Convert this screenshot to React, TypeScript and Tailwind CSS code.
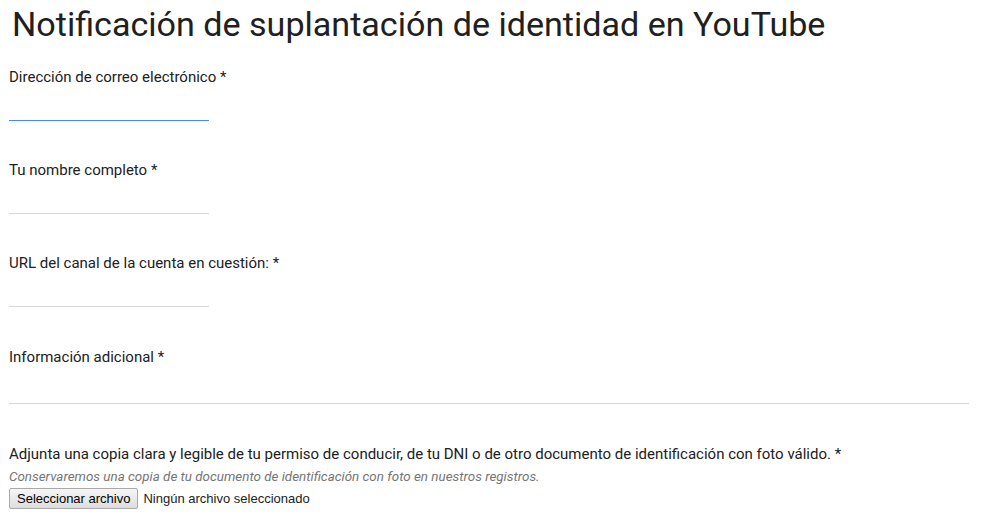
export default function App() {
  return (
    <div className="min-h-[531px] bg-white text-[#212121] font-['Roboto',sans-serif]">
      <h1 className="pl-[12px] pt-[2px] text-[34.1px] leading-[44px] font-normal text-[#202020]">
        Notificación de suplantación de identidad en YouTube
      </h1>
      <div className="pl-[9px] pr-[21px] pt-[22px]">
        <Field label="Dirección de correo electrónico *" active />
        <Field label="Tu nombre completo *" />
        <Field label="URL del canal de la cuenta en cuestión: *" />
        <div className="pt-[1px]">
          <div className="text-[15px] leading-[18px]">Información adicional *</div>
          <div className="mt-[37px] w-full h-[1px] bg-[#d6d6d6]" />
        </div>
        <div className="mt-[41px] text-[15px] leading-[18px]">
          Adjunta una copia clara y legible de tu permiso de conducir, de tu DNI o de otro documento de identificación con foto válido. *
        </div>
        <div className="mt-[6px] text-[13.4px] leading-[15px] italic text-[#757575]">
          Conservaremos una copia de tu documento de identificación con foto en nuestros registros.
        </div>
        <div className="mt-[4px] flex items-center gap-[5px] text-[13px] font-['Liberation_Sans',Arial,sans-serif]">
          <button className="h-[21px] px-[7px] border border-[#a9a9a9] rounded-[2px] bg-[linear-gradient(#f6f6f6,#dddddd)] text-[13px] text-black leading-none">
            Seleccionar archivo
          </button>
          <span className="text-[#222]">Ningún archivo seleccionado</span>
        </div>
      </div>
    </div>
  );
}

function Field({ label, active }: { label: string; active?: boolean }) {
  return (
    <div className="h-[93px]">
      <div className="text-[15px] leading-[18px]">{label}</div>
      <div className={`mt-[34px] w-[200px] h-[1px] ${active ? "bg-[#4a87e8]" : "bg-[#d6d6d6]"}`} />
    </div>
  );
}
